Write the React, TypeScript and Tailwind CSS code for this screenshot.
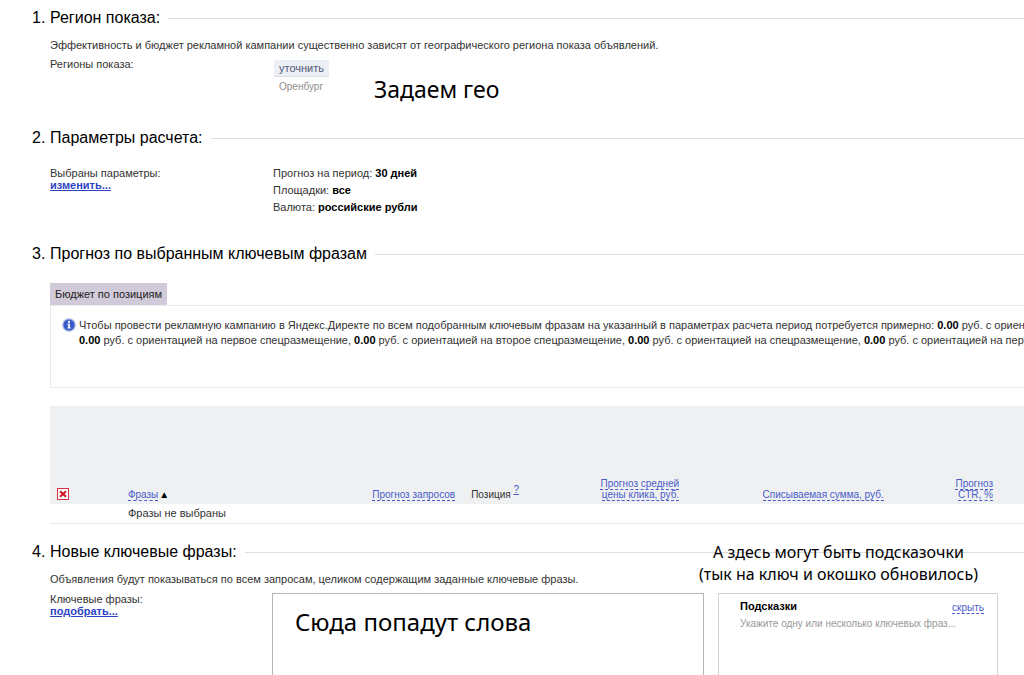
import React from "react";

interface SectionProps {
  number: number;
  title: string;
  className?: string;
  children: React.ReactNode;
}

const Section: React.FC<SectionProps> = ({
  number,
  title,
  className = "",
  children,
}) => {
  return (
    <section className={className}>
      <h2 className="flex items-center text-base leading-6 text-black">
        <span className="w-[18px] shrink-0">{number}.</span>
        <span className="whitespace-nowrap">{title}</span>
        <span className="ml-2 flex-1 border-t border-[#dcdee0]" />
      </h2>
      <div className="pl-[18px]">{children}</div>
    </section>
  );
};

const InfoIcon = () => (
  <svg viewBox="0 0 14 14" className="h-[14px] w-[14px] shrink-0">
    <circle cx="7" cy="7" r="6.8" fill="#a9b9e6" />
    <circle cx="7" cy="7" r="5.6" fill="#3a5cc8" />
    <circle cx="7" cy="3.9" r="1.1" fill="#fff" />
    <path d="M5.4 5.8h2.5v3.8h.9v1H5.3v-1h.9V6.8h-.8z" fill="#fff" />
  </svg>
);

const RemoveIcon = () => (
  <svg viewBox="0 0 12 12" className="h-3 w-3">
    <rect x="0.5" y="0.5" width="11" height="11" fill="#fff" stroke="#d83040" />
    <path d="M3 3.2l6 5.6M9 3.2L3 8.8" stroke="#d01020" strokeWidth="1.9" />
  </svg>
);

const SortLink: React.FC<{ children: React.ReactNode }> = ({ children }) => (
  <a
    href="#"
    className="border-b border-dashed border-[#4a5cc8] text-[#4a5cc8]"
  >
    {children}
  </a>
);

const params = [
  { label: "Прогноз на период:", value: "30 дней" },
  { label: "Площадки:", value: "все" },
  { label: "Валюта:", value: "российские рубли" },
];

const Budget = () => <b className="text-black">0.00</b>;

const App: React.FC = () => {
  return (
    <main className="flex h-screen flex-col overflow-hidden bg-white pt-[6px] pl-8 font-['Liberation_Sans',Arial,sans-serif] text-[11px] leading-[15px] text-[#333]">
      <Section number={1} title="Регион показа:" className="h-[120px] shrink-0">
        <p className="mt-2">
          Эффективность и бюджет рекламной кампании существенно зависят от
          географического региона показа объявлений.
        </p>
        <div className="mt-1 flex">
          <span className="w-[224px]">Регионы показа:</span>
          <div className="mt-[3px] w-[100px]">
            <button
              type="button"
              className="block h-[17px] border-b border-[#dcdfe4] bg-[#eceff3] px-[5px] text-[#4f5877]"
            >
              уточнить
            </button>
            <p className="mt-[2px] pl-[5px] text-[10px] text-[#8c8c8c]">
              Оренбург
            </p>
          </div>
          <p className="mt-4 font-['Noto_Sans',sans-serif] text-[23px] leading-8 text-black">
            Задаем гео
          </p>
        </div>
      </Section>

      <Section
        number={2}
        title="Параметры расчета:"
        className="h-[116px] shrink-0"
      >
        <div className="mt-[15px] flex">
          <div className="mt-[2px] w-[223px] leading-3">
            <p>Выбраны параметры:</p>
            <a href="#" className="font-bold text-[#2c43c4] underline">
              изменить...
            </a>
          </div>
          <div className="leading-[17px]">
            {params.map((param) => (
              <p key={param.label}>
                {param.label} <b className="text-black">{param.value}</b>
              </p>
            ))}
          </div>
        </div>
      </Section>

      <Section
        number={3}
        title="Прогноз по выбранным ключевым фразам"
        className="h-[298px] shrink-0"
      >
        <button
          type="button"
          className="mt-[17px] block h-[22px] bg-[#d1cad8] px-[5px] text-[#222]"
        >
          Бюджет по позициям
        </button>
        <div className="flex h-[83px] gap-[3px] overflow-hidden border border-r-0 border-[#ebecee] pt-3 pl-[11px]">
          <InfoIcon />
          <p className="whitespace-nowrap">
            Чтобы провести рекламную кампанию в Яндекс.Директе по всем
            подобранным ключевым фразам на указанный в параметрах расчета период
            потребуется примерно: <Budget /> руб. с ориентацией
            <br />
            <Budget /> руб. с ориентацией на первое спецразмещение, <Budget />{" "}
            руб. с ориентацией на второе спецразмещение, <Budget /> руб. с
            ориентацией на спецразмещение, <Budget /> руб. с ориентацией на
            первую позицию
          </p>
        </div>

        <table className="mt-[18px] w-full table-fixed border-b border-[#e8e9eb] leading-[11px]">
          <thead>
            <tr className="h-[98px] bg-[#eef0f2] align-bottom text-[10px] whitespace-nowrap *:pb-1 *:font-normal">
              <th className="w-[8%] pl-[7px] text-left">
                <button type="button" aria-label="Удалить" className="block">
                  <RemoveIcon />
                </button>
              </th>
              <th className="w-[17%] text-left">
                <SortLink>Фразы</SortLink>
                <span className="pl-px text-black">▲</span>
              </th>
              <th className="w-[16.6%] text-right">
                <SortLink>Прогноз запросов</SortLink>
              </th>
              <th className="w-[10%] pl-4 text-left">
                Позиция{" "}
                <sup className="text-[10px]">
                  <a href="#" className="text-[#4a5cc8] underline">
                    ?
                  </a>
                </sup>
              </th>
              <th className="w-[13%] text-right">
                <SortLink>Прогноз средней</SortLink>
                <br />
                <SortLink>цены клика, руб.</SortLink>
              </th>
              <th className="w-[21%] text-right">
                <SortLink>Списываемая сумма, руб.</SortLink>
              </th>
              <th className="pr-[31px] text-right">
                <SortLink>Прогноз</SortLink>
                <br />
                <SortLink>CTR, %</SortLink>
              </th>
            </tr>
          </thead>
          <tbody>
            <tr className="h-[19px]">
              <td />
              <td colSpan={6}>Фразы не выбраны</td>
            </tr>
          </tbody>
        </table>
      </Section>

      <Section number={4} title="Новые ключевые фразы:" className="relative">
        <p className="mt-2">
          Объявления будут показываться по всем запросам, целиком содержащим
          заданные ключевые фразы.
        </p>
        <p className="absolute top-px right-[46px] text-center font-['Noto_Sans',sans-serif] text-base leading-[22px] text-black">
          А здесь могут быть подсказочки
          <br />
          (тык на ключ и окошко обновилось)
        </p>
        <div className="mt-[6px] flex pr-[26px]">
          <div className="w-[222px] shrink-0 leading-3">
            <label htmlFor="phrases">Ключевые фразы:</label>
            <br />
            <a href="#" className="font-bold text-[#2c43c4] underline">
              подобрать...
            </a>
          </div>
          <textarea
            id="phrases"
            defaultValue="Сюда попадут слова"
            className="h-[160px] min-w-0 flex-1 resize-none border border-[#b5b5b5] px-[22px] py-3 font-['Noto_Sans',sans-serif] text-2xl leading-8 text-black outline-none"
          />
          <aside className="ml-[14px] h-[160px] w-[280px] shrink-0 border border-[#d2d2d2] pt-[5px] pr-[13px] pl-[21px]">
            <div className="flex justify-between">
              <h3 className="font-bold text-black">Подсказки</h3>
              <span className="pt-px text-[10px]">
                <SortLink>скрыть</SortLink>
              </span>
            </div>
            <p className="mt-px text-[10px] text-[#999]">
              Укажите одну или несколько ключевых фраз...
            </p>
          </aside>
        </div>
      </Section>
    </main>
  );
};

export default App;
